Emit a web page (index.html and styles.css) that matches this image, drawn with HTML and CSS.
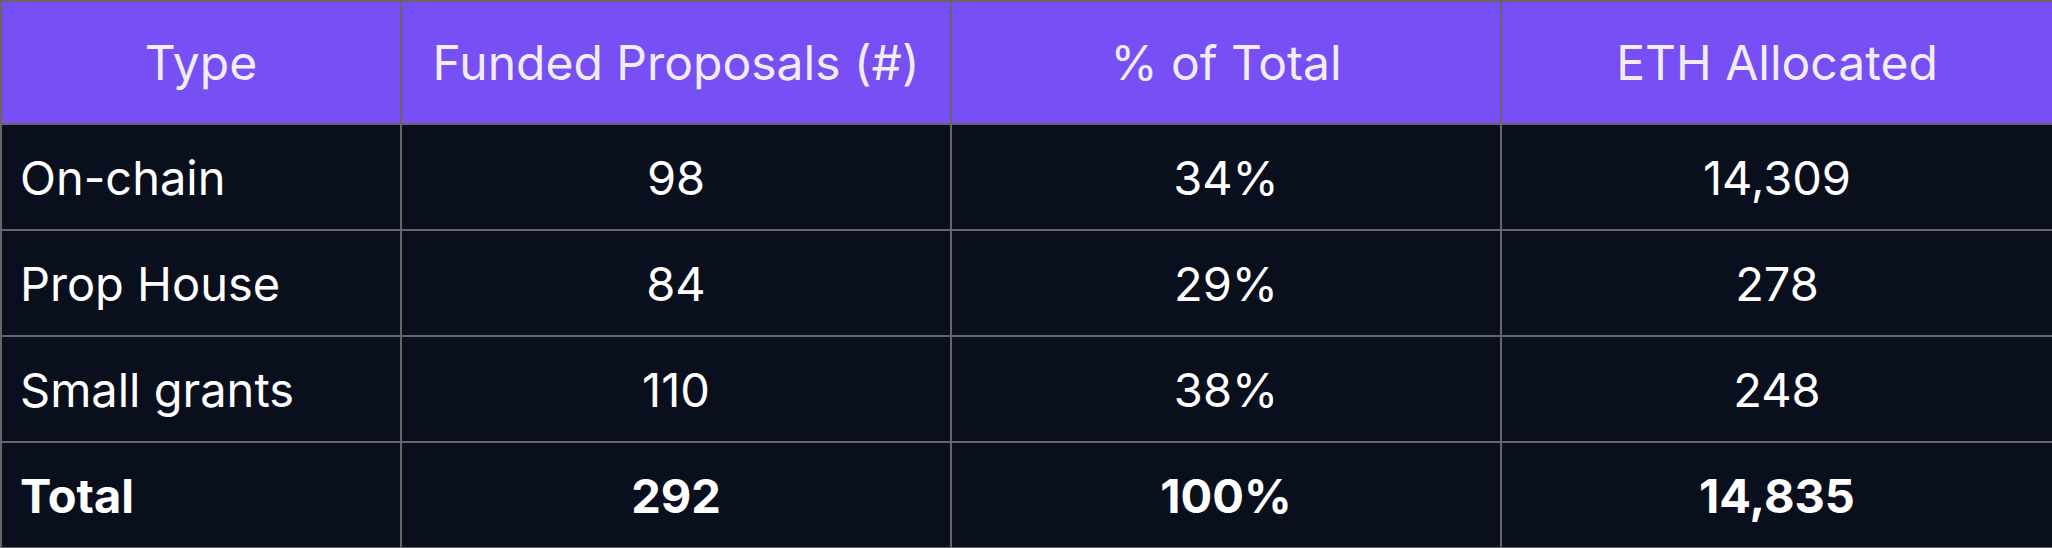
FILE: index.html
```html
<!DOCTYPE html>
<html>
<head>
<meta charset="utf-8">
<link rel="stylesheet" href="styles.css">
</head>
<body>
<table class="grants">
  <colgroup>
    <col class="c1"><col class="c2"><col class="c3"><col class="c4">
  </colgroup>
  <thead>
    <tr class="head">
      <th>Type</th>
      <th>Funded Proposals (#)</th>
      <th>% of Total</th>
      <th>ETH Allocated</th>
    </tr>
  </thead>
  <tbody>
    <tr class="row">
      <td class="label">On-chain</td><td>98</td><td>34%</td><td>14,309</td>
    </tr>
    <tr class="row">
      <td class="label">Prop House</td><td>84</td><td>29%</td><td>278</td>
    </tr>
    <tr class="row">
      <td class="label">Small grants</td><td>110</td><td>38%</td><td>248</td>
    </tr>
    <tr class="row total">
      <td class="label">Total</td><td>292</td><td>100%</td><td>14,835</td>
    </tr>
  </tbody>
</table>
</body>
</html>
```
FILE: styles.css
```css
html, body {
  margin: 0;
  padding: 0;
  background: #0a0f1e;
}
.grants {
  width: 2052px;
  height: 548px;
  border-collapse: collapse;
  table-layout: fixed;
  font-family: Inter, "Noto Sans", sans-serif;
  color: #ffffff;
}
.c1 { width: 400px; }
.c2 { width: 550px; }
.c3 { width: 550px; }
.c4 { width: 552px; }
.grants th, .grants td {
  border: 2px solid #666666;
  text-align: center;
  vertical-align: middle;
  padding: 0 18px;
  font-size: 47px;
  font-weight: 400;
}
.head th {
  background: #784ff4;
  color: #efedf7;
  height: 121px;
  font-size: 48px;
}
.row td {
  background: #0a0f1e;
  height: 104px;
}
.grants td.label {
  text-align: left;
}
.total td {
  font-weight: 700;
}
```
